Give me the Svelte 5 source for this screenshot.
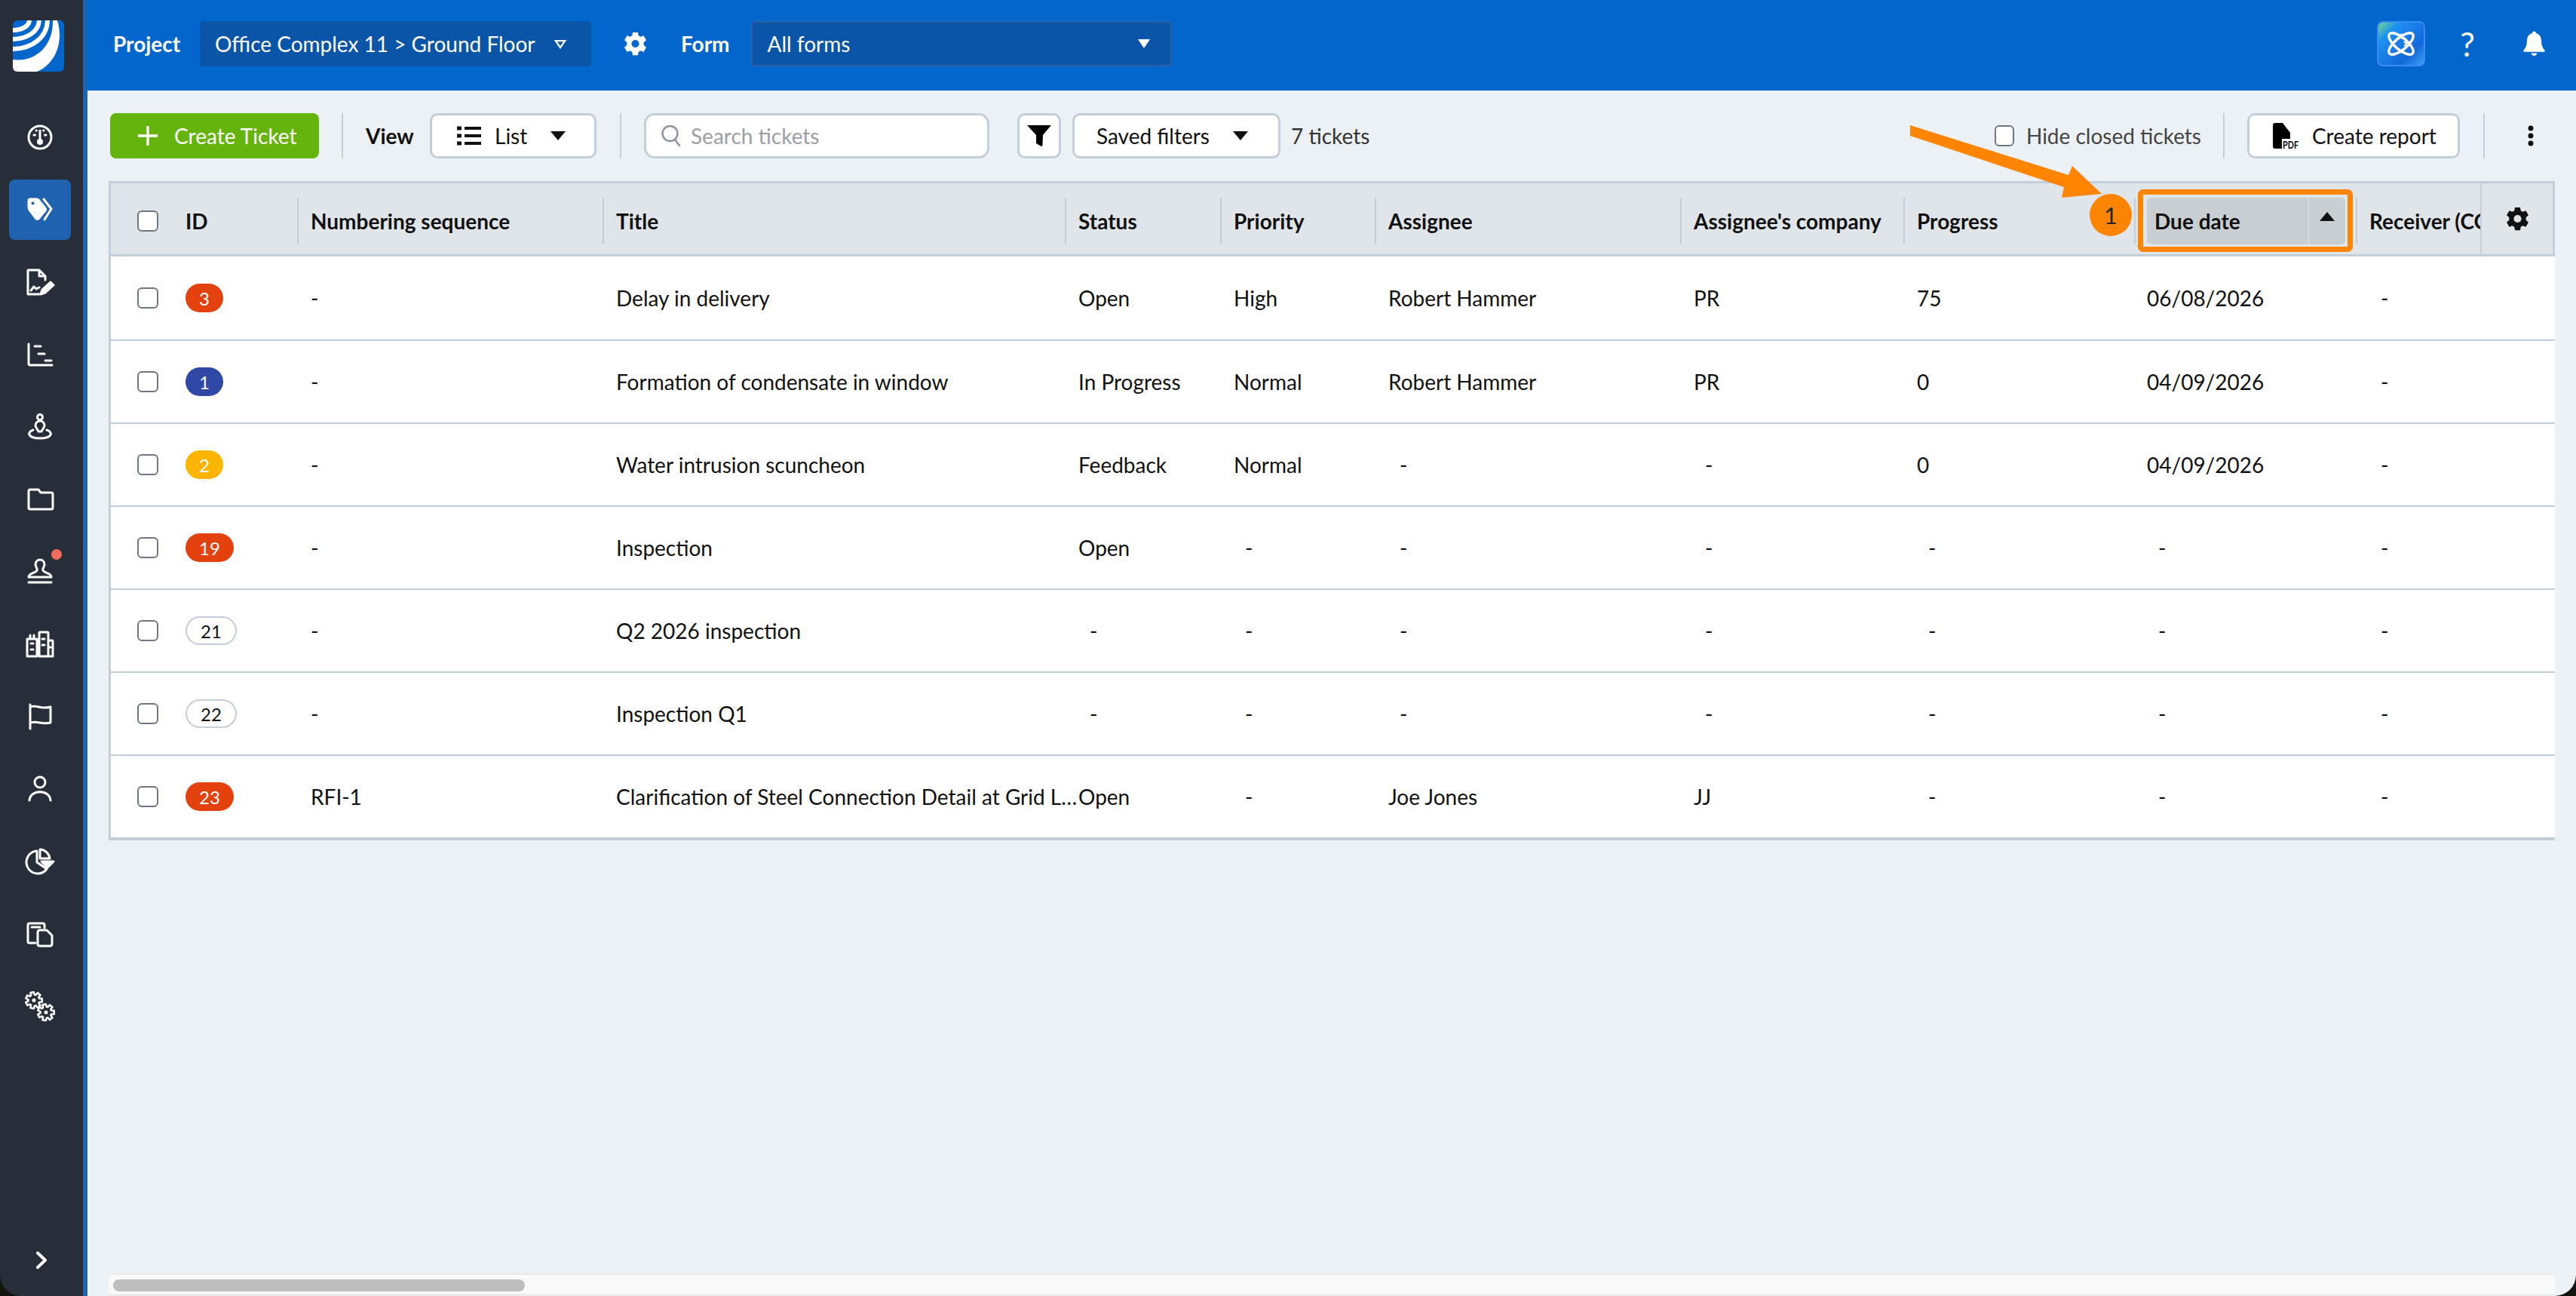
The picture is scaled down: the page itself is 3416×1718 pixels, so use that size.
<script>
  function gearPath(cx, cy, rO, rI, n) {
    const pts = [];
    for (let i = 0; i < n; i++) {
      const a = (i * 2 * Math.PI) / n;
      for (const [d, r] of [[-0.33, rI], [-0.2, rO], [0.2, rO], [0.33, rI]]) {
        pts.push(`${(cx + r * Math.cos(a + d)).toFixed(2)} ${(cy + r * Math.sin(a + d)).toFixed(2)}`);
      }
    }
    return 'M' + pts.join('L') + 'z';
  }
  const columns = [
    { key: 'num', label: 'Numbering sequence' },
    { key: 'title', label: 'Title' },
    { key: 'status', label: 'Status' },
    { key: 'priority', label: 'Priority' },
    { key: 'assignee', label: 'Assignee' },
    { key: 'company', label: "Assignee's company" },
    { key: 'progress', label: 'Progress' },
  ];
  const rows = [
    { id: '3', tone: 'red', num: '-', title: 'Delay in delivery', status: 'Open', priority: 'High', assignee: 'Robert Hammer', company: 'PR', progress: '75', due: '06/08/2026' },
    { id: '1', tone: 'blue', num: '-', title: 'Formation of condensate in window', status: 'In Progress', priority: 'Normal', assignee: 'Robert Hammer', company: 'PR', progress: '0', due: '04/09/2026' },
    { id: '2', tone: 'yellow', num: '-', title: 'Water intrusion scuncheon', status: 'Feedback', priority: 'Normal', assignee: '-', company: '-', progress: '0', due: '04/09/2026' },
    { id: '19', tone: 'red', num: '-', title: 'Inspection', status: 'Open', priority: '-', assignee: '-', company: '-', progress: '-', due: '-' },
    { id: '21', tone: 'plain', num: '-', title: 'Q2 2026 inspection', status: '-', priority: '-', assignee: '-', company: '-', progress: '-', due: '-' },
    { id: '22', tone: 'plain', num: '-', title: 'Inspection Q1', status: '-', priority: '-', assignee: '-', company: '-', progress: '-', due: '-' },
    { id: '23', tone: 'red', num: 'RFI-1', title: 'Clarification of Steel Connection Detail at Grid Line 4', status: 'Open', priority: '-', assignee: 'Joe Jones', company: 'JJ', progress: '-', due: '-' },
  ];
</script>

{#snippet gear(cls)}
  <svg class={cls} viewBox="0 0 24 24"><path fill-rule="evenodd" d="M9.500 1h5l.6 3.200 1.900 1.100 3-1.100 2.500 4.400-2.400 2.100v2.600l2.400 2.100-2.500 4.400-3-1.100-1.900 1.100-.6 3.200h-5l-.6-3.200L7 18.700l-3 1.100-2.500-4.400 2.400-2.100v-2.600L1.500 8.600 4 4.200l3 1.100 1.900-1.100zM12 8.300a3.700 3.700 0 1 0 0 7.400 3.700 3.700 0 0 0 0-7.400z"/></svg>
{/snippet}

<div class="page">
  <aside class="rail">
    <div class="logo">
      <svg viewBox="0 0 68 68">
        <defs><clipPath id="logo-clip"><rect width="68" height="68" rx="6"/></clipPath></defs>
        <g clip-path="url(#logo-clip)">
          <rect width="68" height="68" fill="#0366cc"/>
          <g fill="none" stroke="#fff" stroke-width="6">
            <path d="M22 -1C22 8 12 13 -1 13"/>
            <path d="M35 -1C35 14 20 25 -1 25"/>
            <path d="M46 -1C46 22 26 38 -1 38"/>
          </g>
          <path fill="#fff" d="M53 0h6C68 30 56 58 32 68H0V52C30 56 54 34 53 0z"/>
        </g>
      </svg>
    </div>
    <nav class="nav">
      <a class="nav-item" href="#dashboard" aria-label="Dashboard"><svg viewBox="0 0 40 40"><circle cx="20" cy="20" r="15"/><path d="M20 11v12"/><circle cx="20" cy="26" r="2.500" class="solid"/><path d="M12 17h1.500M26.500 17h1.500M15 11h.5M24.500 11h.5"/></svg></a>
      <a class="nav-item active" href="#tickets" aria-label="Tickets"><svg viewBox="0 0 40 40"><path class="solid" d="M5 8q0-2 2-2h8q2 0 3 1l9 11q1 2 0 3l-9 11q-2 1-3 0L6 20q-1-1-1-3z"/><circle cx="10.500" cy="11.500" r="2" class="hole"/><path d="M25 6l10 13-9 14"/></svg></a>
      <a class="nav-item" href="#forms" aria-label="Forms"><svg viewBox="0 0 40 40"><path d="M19 36H4V4h15l8 8v5M19 4v8h8M8 31l4-5 3 3 4-2"/><path class="solid" d="M21 36l2-6 11-10 4 4-11 10z"/></svg></a>
      <a class="nav-item" href="#gantt" aria-label="Schedule"><svg viewBox="0 0 40 40"><path d="M5 6v26q0 2 2 2h29M13 9h8M18 19h8M27 28h8"/></svg></a>
      <a class="nav-item" href="#locate" aria-label="Location"><svg viewBox="0 0 40 40"><circle cx="20" cy="7" r="3.500"/><path d="M14 18a6 6 0 0 1 12 0c0 3-3 5-4 8h-4c-1-3-4-5-4-8zM11 24c-9 3-7 11 9 11s18-8 9-11"/></svg></a>
      <a class="nav-item" href="#folder" aria-label="Files"><svg viewBox="0 0 40 40"><path d="M5 9q0-2 2-2h11l3 4h14q2 0 2 2v18q0 2-2 2H7q-2 0-2-2z"/></svg></a>
      <a class="nav-item" href="#approve" aria-label="Approvals"><svg viewBox="0 0 40 40"><path d="M5 27c0-6 10-5 11-9 1-3-2-4-2-8a6 6 0 0 1 12 0c0 4-3 5-2 8 1 4 11 3 11 9zM5 34h30"/></svg><span class="dot"></span></a>
      <a class="nav-item" href="#buildings" aria-label="Companies"><svg viewBox="0 0 40 40"><path d="M3 13h13v23H3zM7 13V8M12 13V8M19 36V5q0-1 1-1h10q1 0 1 1v31M31 15h5q1 0 1 1v20H19M8 19h3M8 27h3M23 13h3M23 21h3M32 24h2" /></svg></a>
      <a class="nav-item" href="#flag" aria-label="Milestones"><svg viewBox="0 0 40 40"><path d="M7 4v32M7 7c10-3 15 4 27 0v21c-12 3-17-3-27 0"/></svg></a>
      <a class="nav-item" href="#person" aria-label="Users"><svg viewBox="0 0 40 40"><circle cx="20" cy="11" r="7"/><path d="M6 35c1-15 27-15 28 0"/></svg></a>
      <a class="nav-item" href="#reports" aria-label="Reports"><svg viewBox="0 0 40 40"><path d="M16 6a15 15 0 1 0 13 24L16 21zM20 4c6 0 12 5 13 12H20z"/><path class="solid" d="M22 20h16l-8 8z"/></svg></a>
      <a class="nav-item" href="#docs" aria-label="Documents"><svg viewBox="0 0 40 40"><path d="M14 32H6q-2 0-2-2V8q0-2 2-2h18q2 0 2 2v4M9 11h11"/><path d="M17 18q0-3 3-3h9l7 7v11q0 3-3 3H20q-3 0-3-3z"/></svg></a>
      <a class="nav-item" href="#settings" aria-label="Settings"><svg class="gears" viewBox="0 0 40 40"><path d={gearPath(12, 12, 11, 7.500, 7)}/><path d={gearPath(28, 28, 11, 7.500, 7)}/><circle cx="12" cy="12" r="1.200" class="solid"/><circle cx="28" cy="28" r="1.200" class="solid"/></svg></a>
    </nav>
    <a class="expand" href="#expand" aria-label="Expand"><svg viewBox="0 0 14 23"><path d="M2 2l10 9.500L2 21"/></svg></a>
  </aside>

  <div class="main">
    <header class="topbar">
      <span class="bar-label project-label">Project</span>
      <button class="bar-select project">
        <span>Office Complex 11 &gt; Ground Floor</span>
        <svg class="hollow-caret" viewBox="0 0 18 14"><path d="M2 2h14l-7 10z"/></svg>
      </button>
      {@render gear('bar-gear')}
      <span class="bar-label">Form</span>
      <button class="bar-select forms">
        <span>All forms</span>
        <svg class="solid-caret" viewBox="0 0 16 12"><path d="M0 0h16l-8 12z"/></svg>
      </button>
      <div class="bar-right">
        <button class="ai" aria-label="Assistant">
          <svg viewBox="0 0 36 32"><g fill="none" stroke="#fff" stroke-width="3.400"><ellipse cx="18" cy="16" rx="20" ry="8" transform="rotate(40 18 16)"/><ellipse cx="18" cy="16" rx="20" ry="8" transform="rotate(-40 18 16)"/></g><g stroke="#1a83ea" stroke-width="5"><path d="M16 6h.01M25 16h.01"/></g><g stroke="#fff" stroke-width="2" stroke-linecap="round"><path d="M13.500 3.500l5 5M18.500 3.500l-5 5M22.500 13.500l5 5M27.500 13.500l-5 5"/></g></svg>
        </button>
        <span class="help">?</span>
        <svg class="bell" viewBox="0 0 30 34"><path fill="#fff" d="M15 0c1.500 0 2.500 1 2.700 2.500C23 4 25 8.500 25 14c0 6 2 9 4.500 12 .7 1 .2 2-1 2H1.500c-1.200 0-1.700-1-1-2C3 23 5 20 5 14 5 8.500 7 4 12.300 2.500 12.500 1 13.500 0 15 0zM11 30h8c-.5 2.500-2 3.500-4 3.500s-3.500-1-4-3.500z"/></svg>
      </div>
    </header>

    <div class="toolbar">
      <button class="create"><svg viewBox="0 0 30 30"><path d="M15 1v28M1 15h28"/></svg>Create Ticket</button>
      <span class="sep first"></span>
      <span class="view-label">View</span>
      <button class="tool list">
        <svg class="list-icon" viewBox="0 0 32 28"><path d="M0 1.500h6v5H0zM10 2h22v4H10zM0 11.500h6v5H0zM10 12h22v4H10zM0 21.500h6v5H0zM10 22h22v4H10z"/></svg>
        <span>List</span>
        <svg class="caret" viewBox="0 0 20 12"><path d="M0 0h20l-10 12z"/></svg>
      </button>
      <span class="sep second"></span>
      <label class="search">
        <svg viewBox="0 0 28 28"><circle cx="11.500" cy="11" r="10"/><path d="M18 19l6 8"/></svg>
        <input placeholder="Search tickets" />
      </label>
      <button class="tool funnel" aria-label="Filter"><svg viewBox="0 0 32 28"><path d="M0 0h32L21 13l-.5 14q-2 1.500-3.500 0L12 24V13z"/></svg></button>
      <button class="tool saved"><span>Saved filters</span><svg class="caret" viewBox="0 0 20 12"><path d="M0 0h20l-10 12z"/></svg></button>
      <span class="count">7 tickets</span>
      <div class="tool-right">
        <label class="hide"><span class="check small"></span>Hide closed tickets</label>
        <span class="sep"></span>
        <button class="tool report">
          <svg viewBox="0 0 34 34"><path d="M0 3q0-3 3-3h10l10 13v8H12v13H3q-3 0-3-3z"/><text x="13" y="34" class="pdf" textLength="21" lengthAdjust="spacingAndGlyphs">PDF</text></svg>
          Create report
        </button>
        <span class="sep"></span>
        <svg class="dots" viewBox="0 0 8 28"><circle cx="4" cy="4" r="3.500"/><circle cx="4" cy="14" r="3.500"/><circle cx="4" cy="24" r="3.500"/></svg>
      </div>
    </div>

    <div class="table">
      <div class="grid head">
        <div class="cell box"><span class="check"></span></div>
        <div class="cell id sepcell">ID</div>
        {#each columns as c}
          <div class="cell sepcell">{c.label}</div>
        {/each}
        <div class="cell due-head sepcell">
          <div class="due-main">Due date</div>
          <div class="due-sort"><svg viewBox="0 0 20 12"><path d="M10 0l10 12H0z"/></svg></div>
        </div>
        <div class="cell clip">Receiver (CC)</div>
      </div>
      {#each rows as r}
        <div class="grid row">
          <div class="cell box"><span class="check"></span></div>
          <div class="cell id"><span class="pill {r.tone}">{r.id}</span></div>
          <div class="cell">{r.num}</div>
          <div class="cell"><span class="ellipsis">{r.title}</span></div>
          <div class="cell" class:dash={r.status === '-'}>{r.status}</div>
          <div class="cell" class:dash={r.priority === '-'}>{r.priority}</div>
          <div class="cell" class:dash={r.assignee === '-'}>{r.assignee}</div>
          <div class="cell" class:dash={r.company === '-'}>{r.company}</div>
          <div class="cell" class:dash={r.progress === '-'}>{r.progress}</div>
          <div class="cell due-cell" class:dash={r.due === '-'}>{r.due}</div>
          <div class="cell dash">-</div>
        </div>
      {/each}
      <div class="settings">{@render gear('col-gear')}</div>
    </div>

    <div class="scrollbar"><div class="thumb"></div></div>

    <svg class="arrow" viewBox="0 0 254 96"><path d="M0 0L210 66 215 54 254 91 201 96 204 82 0 14z"/></svg>
    <span class="badge-num">1</span>
    <span class="highlight"></span>
  </div>
</div>

<style>
  :global(body) { margin: 0; background: #14140f; }
  * { box-sizing: border-box; }
  .page { width: 3416px; height: 1718px; display: flex; overflow: hidden; font-family: Lato, "Open Sans", sans-serif; font-size: 28px; color: #111; border-radius: 0 0 28px 28px; }
  button, input { font: inherit; color: inherit; }

  .rail { width: 116px; flex: none; background: #272e3a; border-right: 6px solid #1e62b0; display: flex; flex-direction: column; padding-top: 27px; }
  .logo { margin-left: 17px; width: 68px; height: 68px; }
  .logo svg { display: block; width: 68px; height: 68px; }
  .nav { margin-top: 47px; display: flex; flex-direction: column; gap: 16px; }
  .nav-item { position: relative; margin-left: 12px; width: 82px; height: 80px; border-radius: 8px; display: flex; align-items: center; justify-content: center; }
  .nav-item.active { background: #1e62b0; }
  .nav-item svg { width: 40px; height: 40px; fill: none; stroke: #fff; stroke-width: 3; stroke-linecap: round; stroke-linejoin: round; }
  .nav-item svg .solid { fill: #fff; }
  .nav-item svg .hole { fill: #1e62b0; stroke: none; }
  .nav-item svg.gears { stroke-width: 2.600; }
  .dot { position: absolute; top: 10px; left: 56px; width: 14px; height: 14px; border-radius: 50%; background: #f26d5e; }
  .expand { margin-top: auto; margin-bottom: 36px; margin-left: 48px; width: 14px; height: 23px; display: block; }
  .expand svg { display: block; width: 14px; height: 23px; fill: none; stroke: #fff; stroke-width: 4; stroke-linecap: round; stroke-linejoin: round; }

  .main { position: relative; flex: 1; min-width: 0; background: #ecf1f5; display: flex; flex-direction: column; }
  .topbar { height: 120px; flex: none; background: #0366cc; color: #fff; display: flex; align-items: center; padding: 0 41px 4px 34px; }
  .bar-label { font-weight: 700; flex: none; }
  .project-label { width: 115px; }
  .bar-select { height: 60px; flex: none; background: #0a55a8; border: 2px solid #0a55a8; border-radius: 4px; display: flex; align-items: center; justify-content: space-between; color: #fff; padding: 0 18px; }
  .project { width: 519px; }
  .forms { width: 558px; margin-left: 28px; border-color: #2a5fa5; padding: 0 27px 0 20px; }
  .hollow-caret { width: 16px; height: 13px; margin-right: 13px; fill: none; stroke: #fff; stroke-width: 2.500; }
  .solid-caret { width: 16px; height: 12px; fill: #fff; }
  :global(.bar-gear) { width: 33px; height: 34px; fill: #fff; margin: 0 44px 0 42px; flex: none; }
  .bar-right { margin-left: auto; display: flex; align-items: center; }
  .ai { width: 64px; height: 60px; padding: 0; border: 2px solid #3a8cf0; border-radius: 8px; background: linear-gradient(135deg, #74d68f 0, #1c90f2 24%, #1a7ae6 50%, #1268d8 72%, #3ba0f5 100%); display: flex; align-items: center; justify-content: center; }
  .ai svg { width: 36px; height: 32px; overflow: visible; }
  .help { width: 22px; margin-left: 45px; font-size: 44px; line-height: 1; text-align: center; color: #fff; }
  .bell { width: 29px; height: 34px; margin-left: 63px; }

  .toolbar { height: 60px; flex: none; margin-top: 30px; margin-right: 56px; padding-left: 30px; display: flex; align-items: stretch; }
  .create { width: 277px; border: 0; border-radius: 8px; background: #65b40e; color: #fff; display: flex; align-items: center; padding: 0 0 0 36px; gap: 21px; }
  .create svg { width: 28px; height: 28px; fill: none; stroke: #fff; stroke-width: 3.500; flex: none; }
  .sep { width: 2px; background: #c3cedb; flex: none; }
  .sep.first { margin: 0 30px; }
  .view-label { font-weight: 700; width: 85px; align-self: center; }
  .tool { background: #fff; border: 3px solid #c3cedb; border-radius: 10px; display: flex; align-items: center; padding: 0; }
  .list { width: 221px; padding-left: 33px; gap: 18px; }
  .list-icon { width: 32px; height: 28px; fill: #111; flex: none; }
  .caret { width: 20px; height: 12px; fill: #111; margin-left: auto; flex: none; }
  .list .caret { margin-right: 38px; }
  .sep.second { margin: 0 30px 0 31px; }
  .search { width: 458px; background: #fff; border: 3px solid #c3cedb; border-radius: 14px; display: flex; align-items: center; padding-left: 20px; gap: 11px; }
  .search svg { width: 28px; height: 28px; fill: none; stroke: #8c95a0; stroke-width: 2.500; stroke-linecap: round; flex: none; }
  .search input { border: 0; outline: 0; background: none; width: 380px; padding: 0; }
  .search input::placeholder { color: #9aa0a6; opacity: 1; }
  .funnel { width: 58px; margin-left: 37px; justify-content: center; }
  .funnel svg { width: 32px; height: 28px; fill: #000; }
  .saved { width: 276px; margin-left: 15px; padding-left: 29px; }
  .saved .caret { margin-right: 40px; }
  .count { align-self: center; margin-left: 14px; color: #333; }
  .tool-right { margin-left: auto; display: flex; align-items: stretch; }
  .hide { display: flex; align-items: center; gap: 16px; color: #444; padding-right: 29px; }
  .tool-right > .sep:nth-of-type(1) { margin-right: 30px; }
  .report { width: 282px; padding-left: 31px; gap: 18px; }
  .report svg { width: 34px; height: 34px; fill: #000; overflow: visible; flex: none; }
  .pdf { font-size: 14px; font-weight: 700; }
  .tool-right > .sep:nth-of-type(2) { margin-left: 31px; }
  .dots { width: 8px; height: 28px; fill: #111; align-self: center; margin-left: 57px; }

  .check { display: block; width: 28px; height: 28px; border: 2px solid #6e7781; border-radius: 6px; background: #fff; flex: none; }
  .check.small { width: 26px; height: 28px; }

  .table { position: relative; margin-top: 30px; margin-left: 28px; width: 3244px; background: #fff; border: 3px solid #c3cedb; border-right: 0; border-bottom-width: 2px; overflow: hidden; flex: none; }
  .grid { display: grid; grid-template-columns: 99px 150px 405px 613px 206px 205px 405px 296px 306px 294px 300px; width: 3400px; align-items: stretch; }
  .head { height: 97px; background: #e0e5e9; font-weight: 700; border-bottom: 3px solid #c3cedb; padding: 19px 0 13px; }
  .row { height: 110px; border-bottom: 2px solid #c3cedb; }
  .head + .row { height: 112px; }
  .row:last-of-type { border-bottom: 0; height: 107px; }
  .cell { display: flex; align-items: center; padding-left: 16px; white-space: nowrap; min-width: 0; }
  .cell.dash { padding-left: 31px; }
  .box { padding-left: 35px; }
  .id { padding-left: 0; }
  .head .sepcell { border-right: 2px solid #c3cedb; }
  .pill { display: inline-flex; align-items: center; justify-content: center; height: 38px; min-width: 50px; padding: 0 18px; border-radius: 19px; font-size: 24px; color: #fff; }
  .pill.red { background: #e3420e; }
  .pill.blue { background: #2f47a5; }
  .pill.yellow { background: #ffb500; }
  .pill.plain { background: #fff; color: #111; border: 2px solid #c3cedb; }
  .ellipsis { display: block; flex: none; width: 613px; overflow: hidden; text-overflow: ellipsis; }
  .due-head { padding-left: 15px; gap: 1px; }
  .due-main { width: 214px; height: 100%; background: #c8ced1; border-radius: 6px 0 0 6px; display: flex; align-items: center; padding-left: 10px; }
  .due-sort { width: 48px; height: 100%; background: #c8ced1; border-radius: 0 6px 6px 0; display: flex; justify-content: center; padding-top: 19px; }
  .due-sort svg { width: 20px; height: 12px; fill: #111; }
  .cell.due-cell { padding-left: 15px; }
  .cell.due-cell.dash { padding-left: 30px; }
  .settings { position: absolute; top: 0; right: 0; width: 99px; height: 94px; background: #e0e5e9; border-left: 2px solid #c3cedb; border-right: 3px solid #c3cedb; display: flex; justify-content: center; padding-top: 30px; }
  :global(.col-gear) { width: 33px; height: 34px; fill: #111; }

  .scrollbar { position: absolute; left: 28px; width: 3244px; top: 1688px; height: 29px; background: #f9f9f9; border-top: 2px solid #eaeaea; border-bottom: 2px solid #eaeaea; padding: 6px; }
  .thumb { width: 546px; height: 16px; border-radius: 8px; background: #bebebe; }

  .arrow { position: absolute; left: 2417px; top: 166px; width: 254px; height: 96px; fill: #ff8500; overflow: visible; }
  .badge-num { position: absolute; left: 2655px; top: 257px; width: 56px; height: 56px; border-radius: 50%; background: #ff8500; display: flex; align-items: center; justify-content: center; font-size: 30px; color: #222; }
  .highlight { position: absolute; left: 2719px; top: 251px; width: 285px; height: 83px; border: 7px solid #ff8500; border-radius: 7px; }
</style>
